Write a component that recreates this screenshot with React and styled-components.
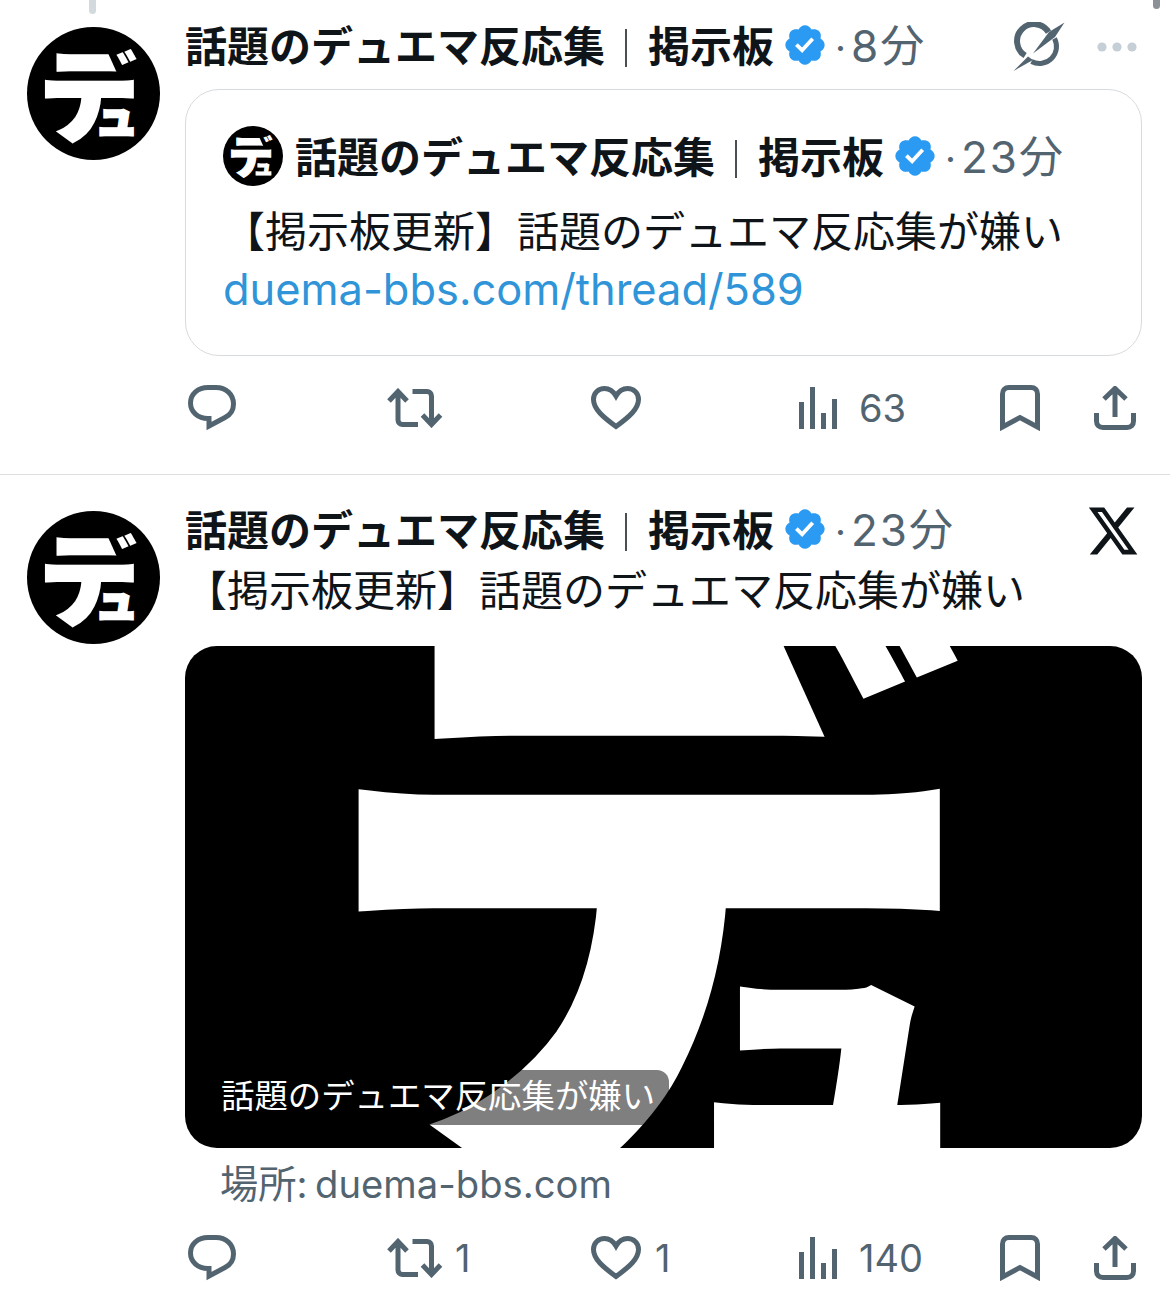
import React from 'react';
import styled, { createGlobalStyle } from 'styled-components';

const GlobalStyle = createGlobalStyle`
  html, body {
    margin: 0;
    padding: 0;
    background: #fff;
  }
  body {
    font-family: "Inter", "Noto Sans CJK JP", sans-serif;
    color: #0f1419;
  }
`;

const Page = styled.div`
  position: relative;
  width: 1170px;
  height: 1315px;
  overflow: hidden;
`;

const ThreadStub = styled.div`
  position: absolute;
  top: -6px;
  left: ${(p) => p.$left}px;
  width: 7px;
  height: ${(p) => p.$height}px;
  border-radius: 4px;
  background: ${(p) => p.$color};
`;

const Tweet = styled.article`
  display: flex;
  gap: 25px;
  box-sizing: border-box;
  height: ${(p) => p.$height}px;
  padding: ${(p) => p.$top}px 28px 0 27px;
  border-bottom: ${(p) => (p.$divider ? '1px solid #dcdfe1' : 'none')};
`;

const AvatarSlot = styled.div`
  padding-top: ${(p) => p.$top}px;
`;

const Body = styled.div`
  flex: 1;
  min-width: 0;
`;

const Head = styled.header`
  display: flex;
  align-items: center;
  height: ${(p) => p.$height || 50}px;
`;

const Name = styled.span`
  margin-top: -3px;
  font-family: "Noto Sans CJK JP", sans-serif;
  font-size: 42px;
  font-weight: 700;
  line-height: 50px;
  white-space: nowrap;
`;

const Pipe = styled.span`
  display: inline-block;
  width: 2px;
  height: 38px;
  margin: 0 21px 0 20px;
  background: #0f1419;
  opacity: 0.75;
  vertical-align: -5px;
`;

const Badge = styled.svg`
  flex: none;
  width: 46px;
  height: 46px;
  margin-left: 8px;
  fill: #2b9af3;
`;

const Time = styled.span`
  margin: 4px 0 0 7px;
  font-family: "Inter", "Noto Sans CJK JP", sans-serif;
  font-size: 44px;
  letter-spacing: 2px;
  line-height: 50px;
  color: #536471;
  white-space: nowrap;
`;

const Dot = styled.span`
  margin-right: 3px;
  font-size: 38px;
`;

const HeadTools = styled.div`
  display: flex;
  align-items: center;
  gap: 32px;
  margin: 4px ${(p) => p.$right}px 0 auto;
`;

const TweetText = styled.p`
  margin: ${(p) => p.$margin || 0};
  font-family: "Noto Sans CJK JP", sans-serif;
  font-size: 42px;
  line-height: 58px;
  white-space: nowrap;
`;

const QuoteCard = styled.div`
  box-sizing: border-box;
  height: 267px;
  margin-top: 19px;
  padding: 46px 30px 0 37px;
  border: 1.5px solid #d7dbde;
  border-radius: 34px;
`;

const QuoteAvatar = styled.div`
  flex: none;
  margin-right: 12px;
`;

const LinkText = styled.a`
  display: block;
  margin-top: 2px;
  font-family: "Inter", sans-serif;
  font-size: 43.4px;
  line-height: 58px;
  color: #2f95d8;
  white-space: nowrap;
`;

const MediaCard = styled.div`
  position: relative;
  height: 502px;
  margin-top: 29px;
  border-radius: 32px;
  overflow: hidden;
  background: #000;
`;

const MediaArt = styled.svg`
  display: block;
  width: 100%;
  height: 100%;
`;

const Chip = styled.div`
  position: absolute;
  left: 23px;
  bottom: 23px;
  height: 55px;
  padding: 0 14px 0 13px;
  border-radius: 12px;
  background: rgba(0, 0, 0, 0.5);
  font-family: "Noto Sans CJK JP", sans-serif;
  font-size: 33.4px;
  line-height: 48px;
  color: #fff;
  white-space: nowrap;
`;

const Source = styled.div`
  margin: 14px 0 0 35px;
  font-family: "Inter", "Noto Sans CJK JP", sans-serif;
  font-size: 38.2px;
  word-spacing: -3px;
  line-height: 44px;
  color: #536471;
  white-space: nowrap;
`;

const Actions = styled.footer`
  display: grid;
  grid-template-columns: 199px 204px 207px 202px 94px auto;
  align-items: center;
  height: 50px;
  margin: ${(p) => p.$top}px 0 0 3px;
`;

const Action = styled.div`
  display: flex;
  align-items: center;
  gap: ${(p) => p.$gap || 14}px;
  font-family: "Inter", sans-serif;
  font-size: 38px;
  line-height: 50px;
  color: #536471;
`;

const Icon = styled.svg`
  display: block;
  flex: none;
  fill: none;
  stroke: #536471;
  stroke-width: 5;
`;

const LogoSvg = styled.svg`
  display: block;
  flex: none;
`;

const LogoGroup = styled.g`
  fill: #fff;
  stroke: #fff;
  stroke-width: 2.5;
  font-family: "Noto Sans CJK JP", sans-serif;
  font-weight: 900;
`;

// the logo's upper bar ends in a slant, so its right end gets masked off
const LogoMark = () => (
  <LogoGroup>
    <text x="11.2" y="106.5" fontSize="101">テ</text>
    <polygon points="76,15 90,46 101,46 101,15" fill="#000" stroke="none" />
    <text x="89" y="74" fontSize="60" strokeWidth="0">゛</text>
    <text x="67.500" y="107" fontSize="44">ュ</text>
  </LogoGroup>
);

const Avatar = ({ size }) => (
  <LogoSvg width={size} height={size} viewBox="0 0 133 133">
    <circle cx="66.5" cy="66.5" r="66.5" fill="#000" />
    <LogoMark />
  </LogoSvg>
);

const VerifiedBadge = () => (
  <Badge viewBox="0 0 24 24">
    <path d="M22.25 12c0-1.43-.88-2.67-2.19-3.34.46-1.39.2-2.9-.81-3.91s-2.52-1.27-3.91-.81c-.66-1.31-1.91-2.19-3.34-2.19s-2.67.88-3.33 2.19c-1.4-.46-2.91-.2-3.92.81s-1.26 2.52-.8 3.91c-1.31.67-2.2 1.91-2.2 3.34s.89 2.67 2.2 3.34c-.46 1.39-.21 2.9.8 3.91s2.52 1.26 3.91.81c.67 1.31 1.91 2.19 3.34 2.19s2.68-.88 3.34-2.19c1.39.45 2.9.2 3.91-.81s1.27-2.52.81-3.91c1.31-.67 2.19-1.91 2.19-3.34z" />
    <path d="M10.54 16.2 6.8 12.46l1.41-1.42 2.26 2.26 4.8-5.23 1.47 1.36-6.2 6.77z" fill="#fff" />
  </Badge>
);

const NameLine = () => (
  <>
    <Name>
      話題のデュエマ反応集
      <Pipe />
      掲示板
    </Name>
    <VerifiedBadge />
  </>
);

const TimeLabel = ({ children }) => (
  <Time>
    <Dot>·</Dot>
    {children}
  </Time>
);

const GrokIcon = () => (
  <svg width="52" height="50" viewBox="0 0 52 50">
    <path d="M35.500 10.100A17 17 0 1 0 12.100 33.500" fill="none" stroke="#536471" strokeWidth="6" />
    <path d="M41.500 16.500A17 17 0 0 1 18.500 39.500" fill="none" stroke="#536471" strokeWidth="5" />
    <path d="M51.500 .500 42 15 20 31.500 36 10Z" fill="#536471" />
    <path d="M.500 49 15 34.500 20 38Z" fill="#536471" />
  </svg>
);

const MoreDots = () => (
  <svg width="40" height="12" viewBox="0 0 40 12">
    <circle cx="5" cy="6" r="4.6" fill="#c6ced6" />
    <circle cx="20" cy="6" r="4.6" fill="#c6ced6" />
    <circle cx="35" cy="6" r="4.6" fill="#c6ced6" />
  </svg>
);

const XLogo = () => (
  <svg width="54" height="58" viewBox="0 0 24 24" preserveAspectRatio="none" fill="#0f1419">
    <path d="M18.244 2.25h3.308l-7.227 8.26 8.502 11.24H16.17l-5.214-6.817L4.99 21.75H1.68l7.73-8.835L1.254 2.25H8.08l4.713 6.231zm-1.161 17.52h1.833L7.084 4.126H5.117z" />
  </svg>
);

const ReplyIcon = () => (
  <Icon width="48" height="46" viewBox="0 0 48 46">
    <path d="M20 2.500h8C38 2.500 45.500 9.500 45.500 19c0 6-3.500 11-8.500 13.500L21 41v-7.500h-1C10 33.500 2.500 27 2.500 18S10 2.500 20 2.500Z" />
  </Icon>
);

const RetweetIcon = () => (
  <Icon width="56" height="40" viewBox="0 0 56 40">
    <path d="M2 13 11 3.500 20 13M11 4v28c0 2.500 2 4.500 4.500 4.500H31" />
    <path d="M25.500 3.500H40c2.500 0 4.500 2 4.500 4.500v28M35.500 27l9 9.500 9-9.500" />
  </Icon>
);

const HeartIcon = () => (
  <Icon width="50" height="44" viewBox="0 0 50 44">
    <path d="M25 40.500C12 31 2.500 23 2.500 13.500 2.500 7 7.500 2.500 13.500 2.500c4.700 0 8.800 2.800 11.500 7.500 2.700-4.700 6.800-7.500 11.500-7.500 6 0 11 4.500 11 11C47.500 23 38 31 25 40.500Z" />
  </Icon>
);

const ViewsIcon = () => (
  <Icon width="40" height="42" viewBox="0 0 40 42">
    <path d="M3.500 15v27M14.500 0v42M25.500 26v16M36.500 12v30" />
  </Icon>
);

const BookmarkIcon = () => (
  <Icon width="40" height="46" viewBox="0 0 40 46">
    <path d="M2.500 42V9C2.500 5 5 2.500 9 2.500h22c4 0 6.500 2.500 6.500 6.500v33L20 32.500Z" />
  </Icon>
);

const ShareIcon = () => (
  <Icon width="42" height="44" viewBox="0 0 42 44">
    <path d="M21 3v28M10 13 21 2.500 32 13M2.500 27v8c0 4 2.500 6.500 6.500 6.500h24c4 0 6.500-2.500 6.500-6.500v-8" />
  </Icon>
);

const ActionRow = ({ top, retweets, likes, views }) => (
  <Actions $top={top}>
    <Action><ReplyIcon /></Action>
    <Action $gap={12}><RetweetIcon />{retweets}</Action>
    <Action><HeartIcon />{likes}</Action>
    <Action $gap={21}><ViewsIcon />{views}</Action>
    <Action><BookmarkIcon /></Action>
    <Action><ShareIcon /></Action>
  </Actions>
);

export default function App() {
  return (
    <Page>
      <GlobalStyle />
      <ThreadStub $left={89} $height={20} $color="#d3dade" />
      <ThreadStub $left={1153} $height={15} $color="#8b9196" />

      <Tweet $height={475} $top={20} $divider>
        <AvatarSlot $top={7}>
          <Avatar size={133} />
        </AvatarSlot>
        <Body>
          <Head>
            <NameLine />
            <TimeLabel>8分</TimeLabel>
            <HeadTools $right={5}>
              <GrokIcon />
              <MoreDots />
            </HeadTools>
          </Head>
          <QuoteCard>
            <Head $height={40}>
              <QuoteAvatar>
                <Avatar size={60} />
              </QuoteAvatar>
              <NameLine />
              <TimeLabel>23分</TimeLabel>
            </Head>
            <TweetText $margin="24px 0 0 0">【掲示板更新】話題のデュエマ反応集が嫌い</TweetText>
            <LinkText>duema-bbs.com/thread/589</LinkText>
          </QuoteCard>
          <ActionRow top={27} views="63" />
        </Body>
      </Tweet>

      <Tweet $height={840} $top={29}>
        <AvatarSlot $top={7}>
          <Avatar size={133} />
        </AvatarSlot>
        <Body>
          <Head>
            <NameLine />
            <TimeLabel>23分</TimeLabel>
            <HeadTools $right={2}>
              <XLogo />
            </HeadTools>
          </Head>
          <TweetText $margin="5px 0 0 0">【掲示板更新】話題のデュエマ反応集が嫌い</TweetText>
          <MediaCard>
            <MediaArt viewBox="-8.6 30.3 146.300 76.700" preserveAspectRatio="none">
              <LogoMark />
            </MediaArt>
            <Chip>話題のデュエマ反応集が嫌い</Chip>
          </MediaCard>
          <Source>場所: duema-bbs.com</Source>
          <ActionRow top={27} retweets="1" likes="1" views="140" />
        </Body>
      </Tweet>
    </Page>
  );
}
